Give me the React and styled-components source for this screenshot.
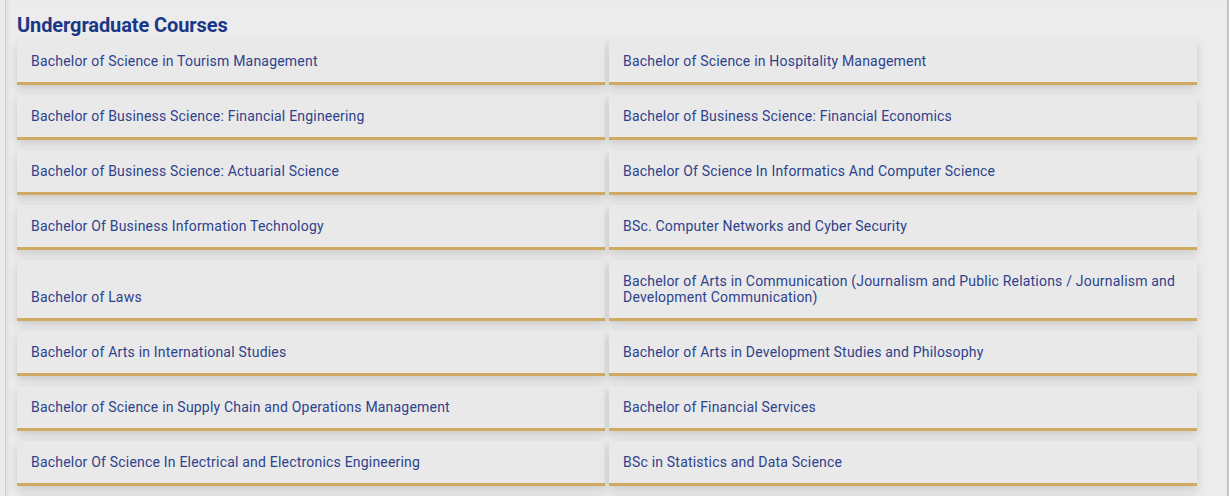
import React from "react";
import styled, { createGlobalStyle } from "styled-components";

const Global = createGlobalStyle`
  html, body { margin: 0; padding: 0; background: #ececec; }
  body { font-family: Roboto, "Liberation Sans", Arial, sans-serif; }
`;

const Frame = styled.div`
  box-sizing: border-box;
  margin-left: 5px;
  width: 1224px;
  min-height: 496px;
  border-left: 1px solid #cdcdcd;
  border-right: 2px solid #c4c4c4;
  box-shadow: inset 3px 0 3px rgba(0, 0, 0, 0.04);
  padding: 14px 29px 0 11px;
`;

const Title = styled.h2`
  margin: 0 0 4px 0;
  font-family: Roboto, "Liberation Sans", sans-serif;
  font-weight: 700;
  font-size: 20px;
  line-height: 22px;
  color: #1c3786;
  letter-spacing: -0.1px;
`;

const Grid = styled.div`
  display: grid;
  grid-template-columns: 588px 588px;
  column-gap: 4px;
  row-gap: 10px;
`;

const Card = styled.a`
  box-sizing: border-box;
  display: flex;
  align-items: flex-end;
  min-height: 45px;
  padding: 13px 20px 13px 14px;
  background: #e9e9e9;
  border-bottom: 3px solid #cfab62;
  box-shadow: 0 4px 9px rgba(0, 0, 0, 0.14);
  color: #2e428c;
  font-size: 14px;
  line-height: 16px;
  text-decoration: none;
  letter-spacing: 0.2px;
`;

const courses = [
  "Bachelor of Science in Tourism Management",
  "Bachelor of Science in Hospitality Management",
  "Bachelor of Business Science: Financial Engineering",
  "Bachelor of Business Science: Financial Economics",
  "Bachelor of Business Science: Actuarial Science",
  "Bachelor Of Science In Informatics And Computer Science",
  "Bachelor Of Business Information Technology",
  "BSc. Computer Networks and Cyber Security",
  "Bachelor of Laws",
  "Bachelor of Arts in Communication (Journalism and Public Relations / Journalism and Development Communication)",
  "Bachelor of Arts in International Studies",
  "Bachelor of Arts in Development Studies and Philosophy",
  "Bachelor of Science in Supply Chain and Operations Management",
  "Bachelor of Financial Services",
  "Bachelor Of Science In Electrical and Electronics Engineering",
  "BSc in Statistics and Data Science",
  "Bachelor of Commerce",
  "Bachelor of Arts in Public Policy",
];

export default function App() {
  return (
    <>
      <Global />
      <Frame>
        <Title>Undergraduate Courses</Title>
        <Grid>
          {courses.map((c) => (
            <Card key={c} href="#">
              {c}
            </Card>
          ))}
        </Grid>
      </Frame>
    </>
  );
}
